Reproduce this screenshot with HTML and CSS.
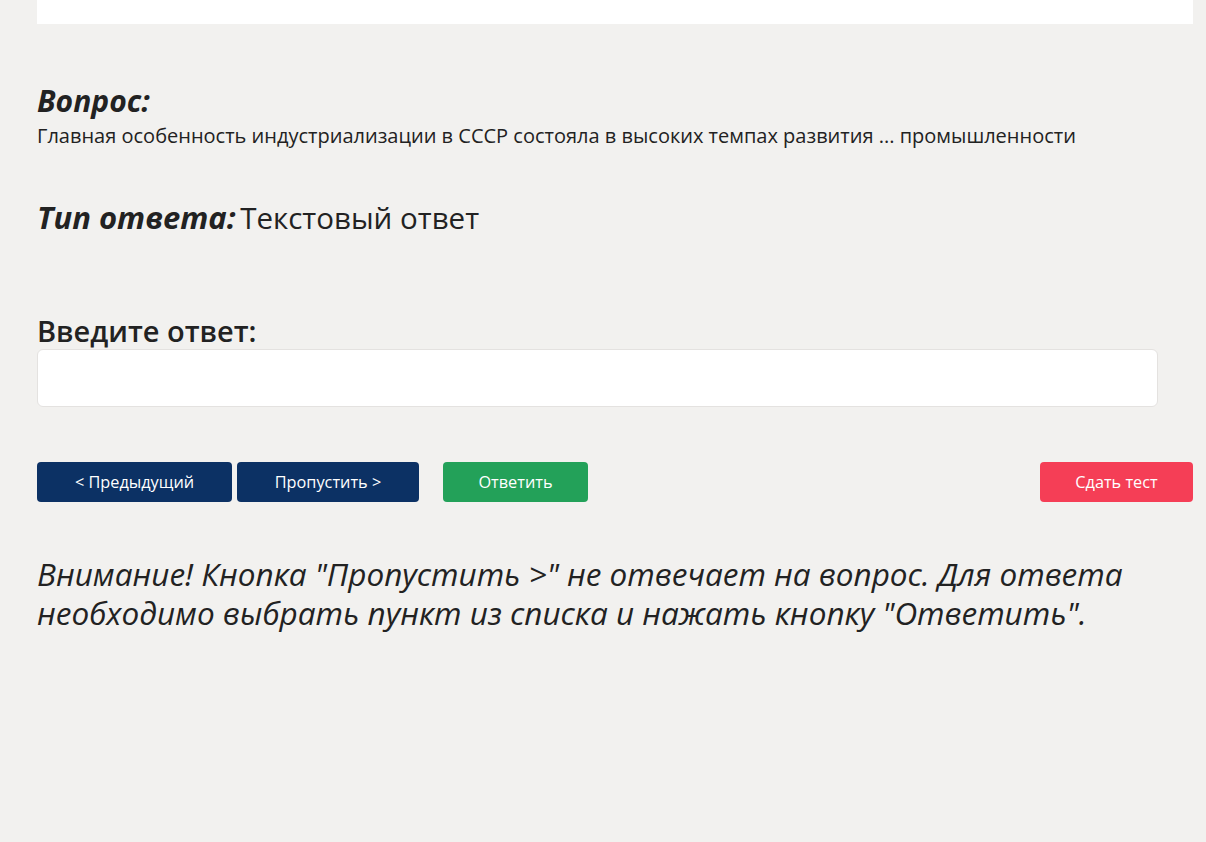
FILE: index.html
```html
<!DOCTYPE html>
<html lang="ru">

<head>
  <meta charset="UTF-8" />
  <meta name="viewport" content="width=device-width, initial-scale=1.0" />
  <title>Тестирование</title>
  <link rel="stylesheet" href="styles.css">
</head>

<body>

  <div class="page">
    <!-- Header card (scrolled off the top) -->
    <div class="top-card"></div>

    <div class="question">
      <h2 class="label">Вопрос:</h2>
      <p class="question-text">Главная особенность индустриализации в СССР состояла в высоких темпах развития ... промышленности</p>
    </div>

    <div class="answer-type">
      <span class="label">Тип ответа:</span> Текстовый ответ
    </div>

    <form class="answer-form">
      <label class="answer-label" for="answer">Введите ответ:</label>
      <input class="answer-input" id="answer" type="text" />

      <div class="actions">
        <button type="button" class="btn btn-dark">&lt; Предыдущий</button>
        <button type="button" class="btn btn-dark btn-skip">Пропустить &gt;</button>
        <button type="submit" class="btn btn-green">Ответить</button>
        <button type="button" class="btn btn-red">Сдать тест</button>
      </div>
    </form>

    <p class="notice">Внимание! Кнопка "Пропустить &gt;" не отвечает на вопрос. Для ответа необходимо выбрать пункт из списка и нажать кнопку "Ответить".</p>
  </div>

</body>

</html>
```

FILE: styles.css
```css
* {
  margin: 0;
  padding: 0;
  box-sizing: border-box;
}

body {
  font-family: "Open Sans", "Noto Sans", sans-serif;
  background-color: #f2f1ef;
  color: #222;
}

.page {
  padding: 0 13px 0 37px;
}

.top-card {
  height: 24px;
  background: #fff;
}

.question {
  margin-top: 57px;
}

.label {
  font-size: 30px;
  font-weight: 700;
  font-style: italic;
  line-height: 40px;
}

.question-text {
  font-size: 20px;
  line-height: 30px;
}

.answer-type {
  margin-top: 45px;
  font-size: 29.5px;
  line-height: 44px;
}

.answer-type .label {
  font-size: 31px;
  margin-right: -3px;
}

.answer-form {
  margin-top: 73px;
}

.answer-label {
  display: block;
  font-size: 29px;
  font-weight: 600;
  line-height: 36px;
}

.answer-input {
  display: block;
  width: 97%;
  height: 58px;
  border: 1px solid #e4e2e0;
  border-radius: 6px;
  background: #fff;
  font: inherit;
  font-size: 18px;
  padding: 0 14px;
}

.actions {
  display: flex;
  margin-top: 55px;
}

.btn {
  height: 40px;
  border: none;
  border-radius: 4px;
  color: #fff;
  font-family: inherit;
  font-size: 16.3px;
  cursor: pointer;
}

.btn-dark {
  background: #0c3164;
  width: 195px;
}

.btn-skip {
  width: 182px;
  margin-left: 5px;
}

.btn-green {
  background: #23a159;
  width: 145px;
  margin-left: 24px;
}

.btn-red {
  background: #f53e56;
  width: 153px;
  margin-left: auto;
}

.notice {
  margin-top: 52px;
  font-size: 31.5px;
  font-style: italic;
  line-height: 39px;
  max-width: 1120px;
}
```
